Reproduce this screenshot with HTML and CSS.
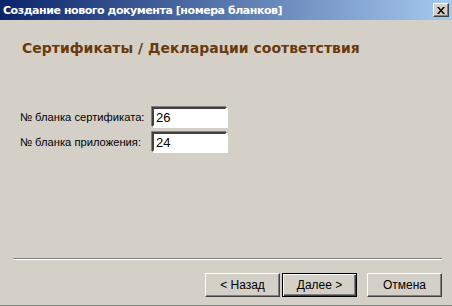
FILE: index.html
```html
<!DOCTYPE html>
<html lang="ru">
<head>
  <meta charset="UTF-8" />
  <title>Создание нового документа [номера бланков]</title>
  <link rel="stylesheet" href="styles.css">
</head>
<body>
  <div class="window">
    <div class="titlebar">
      <span class="title">Создание нового документа [номера бланков]</span>
      <button class="close" title="Закрыть">
        <svg width="8" height="7" viewBox="0 0 8 7">
          <path d="M0 0h2l2 2.5 2-2.5h2l-3 3.5 3 3.5h-2l-2-2.5-2 2.5h-2l3-3.5z" fill="#000"/>
        </svg>
      </button>
    </div>

    <div class="content">
      <h1 class="heading">Сертификаты / Декларации соответствия</h1>

      <div class="form">
        <label class="row">
          <span class="label">№ бланка сертификата:</span>
          <input class="field" type="text" value="26">
        </label>
        <label class="row">
          <span class="label">№ бланка приложения:</span>
          <input class="field" type="text" value="24">
        </label>
      </div>
    </div>

    <div class="footer">
      <div class="separator"></div>
      <div class="buttons">
        <button class="btn">&lt; Назад</button>
        <button class="btn default">Далее &gt;</button>
        <button class="btn cancel">Отмена</button>
      </div>
    </div>
  </div>
</body>
</html>
```

FILE: styles.css
```css
body {
  margin: 0;
  padding: 0;
  background: #d4d0c8;
  font-family: "Liberation Sans", Arial, sans-serif;
  font-size: 12px;
  color: #000;
}

.window {
  width: 452px;
  height: 306px;
  display: flex;
  flex-direction: column;
  box-sizing: border-box;
  border-bottom: 1px solid #808080;
  background: #d4d0c8;
}

.titlebar {
  height: 20px;
  display: flex;
  align-items: center;
  justify-content: space-between;
  padding: 0 3px 0 3px;
  background: linear-gradient(to right, #0a246a, #a6caf0);
}

.title {
  color: #fff;
  font-family: "DejaVu Sans", Verdana, sans-serif;
  font-weight: bold;
  font-size: 11px;
  letter-spacing: -0.45px;
}

.close {
  width: 16px;
  height: 14px;
  padding: 0;
  display: flex;
  align-items: center;
  justify-content: center;
  background: #d4d0c8;
  border: 1px solid;
  border-color: #fff #404040 #404040 #fff;
  box-shadow: inset -1px -1px 0 #808080;
}

.content {
  flex: 1;
  padding: 0 20px;
}

.heading {
  margin: 20px 0 0 2px;
  font-family: "DejaVu Sans", Verdana, sans-serif;
  font-size: 14px;
  font-weight: bold;
  color: #6b3a0c;
}

.form {
  margin-top: 51px;
  display: flex;
  flex-direction: column;
  gap: 5px;
}

.row {
  display: flex;
  align-items: center;
}

.label {
  flex: none;
  width: 132px;
  white-space: nowrap;
  font-size: 11.2px;
}

.field {
  width: 75px;
  height: 20px;
  box-sizing: border-box;
  padding: 0 2px;
  border: 2px solid;
  border-color: #404040 #fff #fff #404040;
  box-shadow: 1px 1px 0 #fff, -1px -1px 0 #808080;
  font-family: "Liberation Sans", Arial, sans-serif;
  font-size: 13px;
  background: #fff;
  outline: none;
}

.footer {
  padding: 0 10px 8px 13px;
}

.separator {
  height: 1px;
  background: #808080;
  border-bottom: 1px solid #fff;
}

.buttons {
  display: flex;
  justify-content: flex-end;
  margin-top: 13px;
}

.btn {
  width: 75px;
  height: 24px;
  margin-left: 2px;
  background: #d4d0c8;
  border: 1px solid;
  border-color: #fff #404040 #404040 #fff;
  box-shadow: inset -1px -1px 0 #808080;
  font-family: "Liberation Sans", Arial, sans-serif;
  font-size: 12px;
  color: #000;
}

.btn.default {
  border: 1px solid #000;
  box-shadow: inset 1px 1px 0 #fff, inset -1px -1px 0 #404040, inset -2px -2px 0 #808080;
}

.btn.cancel {
  margin-left: 10px;
}
```
